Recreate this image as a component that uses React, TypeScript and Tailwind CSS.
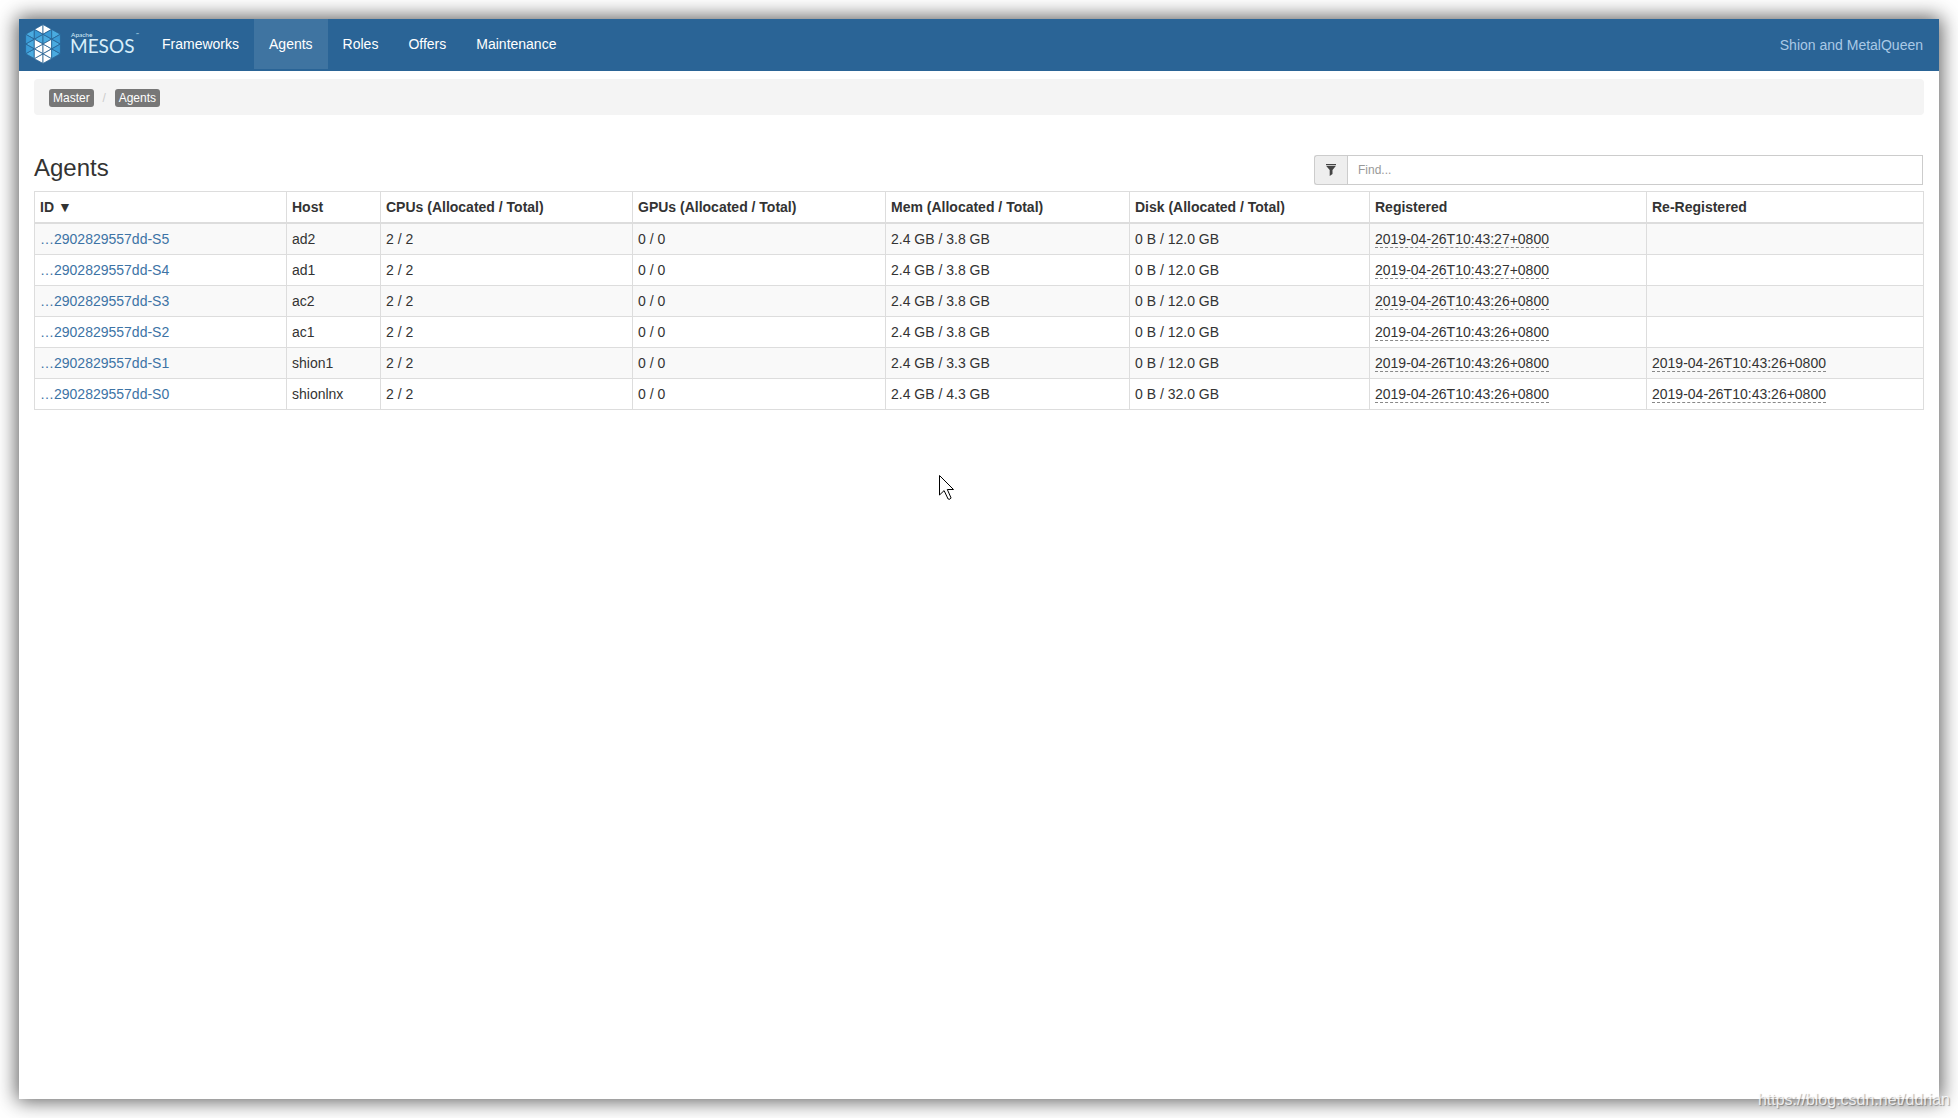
import React, { useState } from 'react';

type Agent = {
  id: string;
  host: string;
  cpus: string;
  gpus: string;
  mem: string;
  disk: string;
  registered: string;
  reregistered?: string;
};

const agents: Agent[] = [
  { id: '2902829557dd-S5', host: 'ad2', cpus: '2 / 2', gpus: '0 / 0', mem: '2.4 GB / 3.8 GB', disk: '0 B / 12.0 GB', registered: '2019-04-26T10:43:27+0800' },
  { id: '2902829557dd-S4', host: 'ad1', cpus: '2 / 2', gpus: '0 / 0', mem: '2.4 GB / 3.8 GB', disk: '0 B / 12.0 GB', registered: '2019-04-26T10:43:27+0800' },
  { id: '2902829557dd-S3', host: 'ac2', cpus: '2 / 2', gpus: '0 / 0', mem: '2.4 GB / 3.8 GB', disk: '0 B / 12.0 GB', registered: '2019-04-26T10:43:26+0800' },
  { id: '2902829557dd-S2', host: 'ac1', cpus: '2 / 2', gpus: '0 / 0', mem: '2.4 GB / 3.8 GB', disk: '0 B / 12.0 GB', registered: '2019-04-26T10:43:26+0800' },
  { id: '2902829557dd-S1', host: 'shion1', cpus: '2 / 2', gpus: '0 / 0', mem: '2.4 GB / 3.3 GB', disk: '0 B / 12.0 GB', registered: '2019-04-26T10:43:26+0800', reregistered: '2019-04-26T10:43:26+0800' },
  { id: '2902829557dd-S0', host: 'shionlnx', cpus: '2 / 2', gpus: '0 / 0', mem: '2.4 GB / 4.3 GB', disk: '0 B / 32.0 GB', registered: '2019-04-26T10:43:26+0800', reregistered: '2019-04-26T10:43:26+0800' },
];

const navItems = ['Frameworks', 'Agents', 'Roles', 'Offers', 'Maintenance'];

const columns = [
  { label: 'ID ▼', width: 'w-[252px]' },
  { label: 'Host', width: 'w-[94px]' },
  { label: 'CPUs (Allocated / Total)', width: 'w-[252px]' },
  { label: 'GPUs (Allocated / Total)', width: 'w-[253px]' },
  { label: 'Mem (Allocated / Total)', width: 'w-[244px]' },
  { label: 'Disk (Allocated / Total)', width: 'w-[240px]' },
  { label: 'Registered', width: 'w-[277px]' },
  { label: 'Re-Registered', width: 'w-[277px]' },
];

// Hexagon split into 24 triangles, with the cap and the "M" in white
function hexTriangles() {
  const w = 8.7;
  const s = 9.75;
  const out: { points: string; fill: string }[] = [];
  const line = (j: number) => {
    const top = -(2 - Math.abs(j) / 2);
    const n = 5 - Math.abs(j);
    return Array.from({ length: n }, (_, m) => [18 + j * w, 20 + (top + m) * s]);
  };
  const add = (pts: number[][], blue: string) => {
    const cx = pts.reduce((a, p) => a + p[0], 0) / 3 - 18;
    const cy = pts.reduce((a, p) => a + p[1], 0) / 3 - 20;
    const white = Math.abs(cx) < w && (cy < -1.3 * s || cy > -0.2 * s);
    out.push({ points: pts.map(p => p.join(',')).join(' '), fill: white ? '#ffffff' : blue });
  };
  for (let j = -2; j < 2; j++) {
    const a = line(j);
    const b = line(j + 1);
    const [long, short] = a.length > b.length ? [a, b] : [b, a];
    short.forEach((p, m) => add([long[m], long[m + 1], p], '#4aabe0'));
    for (let m = 0; m < short.length - 1; m++) add([short[m], short[m + 1], long[m + 1]], '#3a9bd6');
  }
  return out;
}

function Logo() {
  return (
    <svg width="116" height="40" viewBox="0 0 116 40" role="img" aria-label="Apache Mesos">
      {hexTriangles().map(t => (
        <polygon key={t.points} points={t.points} fill={t.fill} stroke="#2a6496" strokeWidth="0.8" />
      ))}
      <g fill="#d8effa" className="font-[Lato,sans-serif]">
        <text x="46" y="13" fontSize="6.5">Apache</text>
        <text x="45" y="29" fontSize="19">MESOS</text>
        <text x="111" y="12" fontSize="4">™</text>
      </g>
    </svg>
  );
}

function Timestamp({ value }: { value: string }) {
  return <time className="inline-block h-[19px] border-b border-dashed border-[#888] leading-5">{value}</time>;
}

export default function App() {
  const [search, setSearch] = useState('');
  const cell = 'border border-[#ddd] px-[5px] h-[31px]';
  const rows = agents.filter(a => a.id.includes(search) || a.host.includes(search));

  return (
    <div className="relative min-h-screen flex bg-white p-[19px] font-['Liberation_Sans',Arial,sans-serif] text-sm text-[#333]">
      <div className="flex-1 bg-white shadow-[0_0_19px_2px_rgba(0,0,0,0.65)]">
        <nav className="flex h-[52px] items-start bg-[#2a6496] text-white">
          <a href="#/" className="w-32 pt-[5px] pl-[6px]">
            <Logo />
          </a>
          <ul className="flex">
            {navItems.map(item => (
              <li key={item}>
                <a
                  href={`#/${item.toLowerCase()}`}
                  className={`block px-[15px] py-[15px] leading-5 ${item === 'Agents' ? 'bg-[#3f74a1]' : ''}`}
                >
                  {item}
                </a>
              </li>
            ))}
          </ul>
          <p className="ml-auto px-4 py-4 leading-5 text-[#a9c9e6]">Shion and MetalQueen</p>
        </nav>

        <main className="px-[15px] pt-2">
          <ol className="flex h-9 items-end rounded bg-[#f4f4f4] px-[15px] pb-2 text-xs leading-[18px]">
            <li>
              <a href="#/" className="block rounded-[3px] bg-[#777] px-1 text-white">Master</a>
            </li>
            <li className="w-[21px] text-center text-[#ccc]">/</li>
            <li className="rounded-[3px] bg-[#777] px-1 text-white">Agents</li>
          </ol>

          <div className="mt-10 mb-[6px] flex items-start justify-between">
            <h3 className="text-2xl leading-[26px]">Agents</h3>
            <div className="mr-px flex h-[30px] w-[609px] text-xs">
              <label htmlFor="find" className="flex w-[33px] items-center justify-center rounded-l-[3px] border border-r-0 border-[#ccc] bg-[#eee]">
                <svg width="10" height="12" viewBox="0 0 10 12" fill="#444" aria-label="Filter">
                  <path d="M0 0h10v1H0zM0 1.800h10L6.500 6V10L3.700 12V6z" />
                </svg>
              </label>
              <input
                id="find"
                type="text"
                value={search}
                onChange={e => setSearch(e.target.value)}
                placeholder="Find..."
                className="min-w-0 flex-1 border border-[#ccc] px-[10px] outline-none placeholder:text-[#999]"
              />
            </div>
          </div>

          <table className="w-full table-fixed border-collapse border border-[#ddd] text-left leading-5">
            <thead>
              <tr>
                {columns.map(col => (
                  <th key={col.label} className={`border border-b-2 border-[#ddd] p-[5px] font-bold ${col.width}`}>
                    {col.label}
                  </th>
                ))}
              </tr>
            </thead>
            <tbody>
              {rows.map(agent => (
                <tr key={agent.id} className="odd:bg-[#f9f9f9]">
                  <td className={cell}>
                    <a href={`#/agents/${agent.id}`} className="text-[#3d73a5]">…{agent.id}</a>
                  </td>
                  <td className={cell}>{agent.host}</td>
                  <td className={cell}>{agent.cpus}</td>
                  <td className={cell}>{agent.gpus}</td>
                  <td className={cell}>{agent.mem}</td>
                  <td className={cell}>{agent.disk}</td>
                  <td className={cell}><Timestamp value={agent.registered} /></td>
                  <td className={cell}>{agent.reregistered && <Timestamp value={agent.reregistered} />}</td>
                </tr>
              ))}
            </tbody>
          </table>
        </main>
      </div>

      {/* mouse pointer */}
      <svg className="absolute top-[475px] left-[939px]" width="16" height="26" viewBox="0 0 16 26">
        <path d="M.5.5V20l4.600-4.400 4 8.400q2 1 3-1L8.300 14.500H14.500z" fill="#fff" stroke="#000" />
      </svg>
      <span className="absolute right-2 bottom-2 text-base leading-5 text-white/80 [text-shadow:1px_1px_1px_rgba(0,0,0,0.35)]">
        https://blog.csdn.net/ddrian
      </span>
    </div>
  );
}
